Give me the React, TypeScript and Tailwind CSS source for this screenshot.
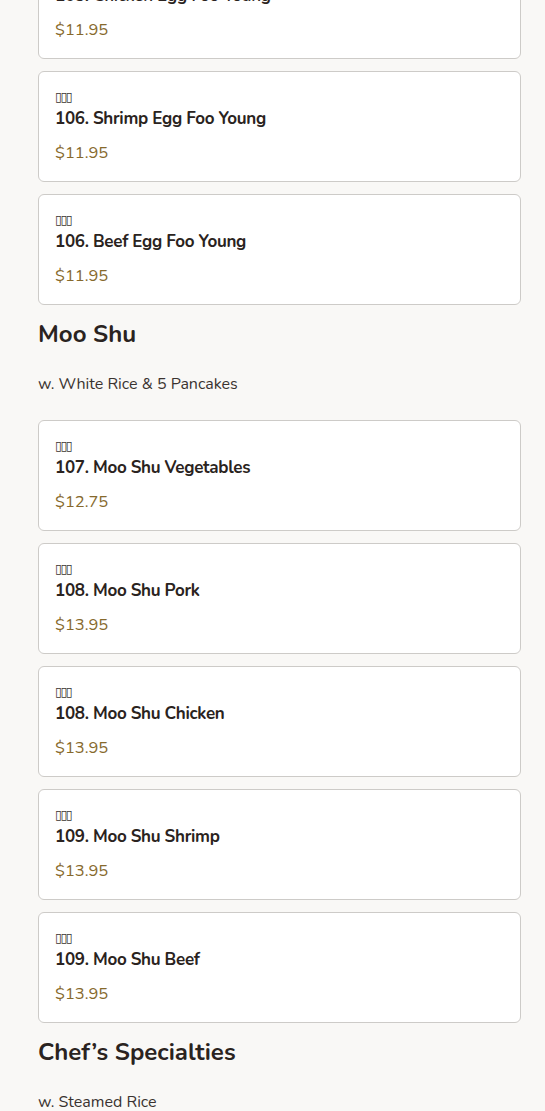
import React from "react";

type Dish = { num: string; name: string; price: string };

const eggFooYoung: Dish[] = [
  { num: "105", name: "Chicken Egg Foo Young", price: "$11.95" },
  { num: "106", name: "Shrimp Egg Foo Young", price: "$11.95" },
  { num: "106", name: "Beef Egg Foo Young", price: "$11.95" },
];

const mooShu: Dish[] = [
  { num: "107", name: "Moo Shu Vegetables", price: "$12.75" },
  { num: "108", name: "Moo Shu Pork", price: "$13.95" },
  { num: "108", name: "Moo Shu Chicken", price: "$13.95" },
  { num: "109", name: "Moo Shu Shrimp", price: "$13.95" },
  { num: "109", name: "Moo Shu Beef", price: "$13.95" },
];

function DishCard({ dish }: { dish: Dish }) {
  return (
    <div className="bg-white border border-[#cdcbc8] rounded-md px-4 pt-[17px] pb-4">
      {/* chinese name renders as missing glyphs in the original */}
      <p
        className="text-[12.5px] leading-4 text-[#3a3330] tracking-[-1.5px]"
        style={{ fontFamily: '"DejaVu Sans", sans-serif' }}
      >
        ▯▯▯
      </p>
      <h3 className="text-[17px] leading-7 font-bold text-[#2a2320] tracking-[-0.3px]">
        {dish.num}. {dish.name}
      </h3>
      <p className="mt-2 text-[16.5px] leading-6 text-[#86692c]">{dish.price}</p>
    </div>
  );
}

function Section({ title, note }: { title: string; note: string }) {
  return (
    <div>
      <h2 className="mt-[13px] text-[24px] leading-8 font-bold text-[#2a2320]">{title}</h2>
      <p className="mt-[22px] mb-[24px] text-[16px] leading-6 text-[#3a3330]">{note}</p>
    </div>
  );
}

export default function App() {
  return (
    <div
      className="min-h-screen bg-[#f9f8f6] pl-[38px] pr-[24px] overflow-hidden"
      style={{ fontFamily: '"Nunito", "Lato", "Noto Sans", sans-serif' }}
    >
      <div className="-mt-[52px] flex flex-col gap-3">
        {eggFooYoung.map((d, i) => (
          <DishCard key={i} dish={d} />
        ))}
      </div>
      <Section title="Moo Shu" note="w. White Rice & 5 Pancakes" />
      <div className="flex flex-col gap-3">
        {mooShu.map((d, i) => (
          <DishCard key={i} dish={d} />
        ))}
      </div>
      <Section title="Chef’s Specialties" note="w. Steamed Rice" />
    </div>
  );
}
